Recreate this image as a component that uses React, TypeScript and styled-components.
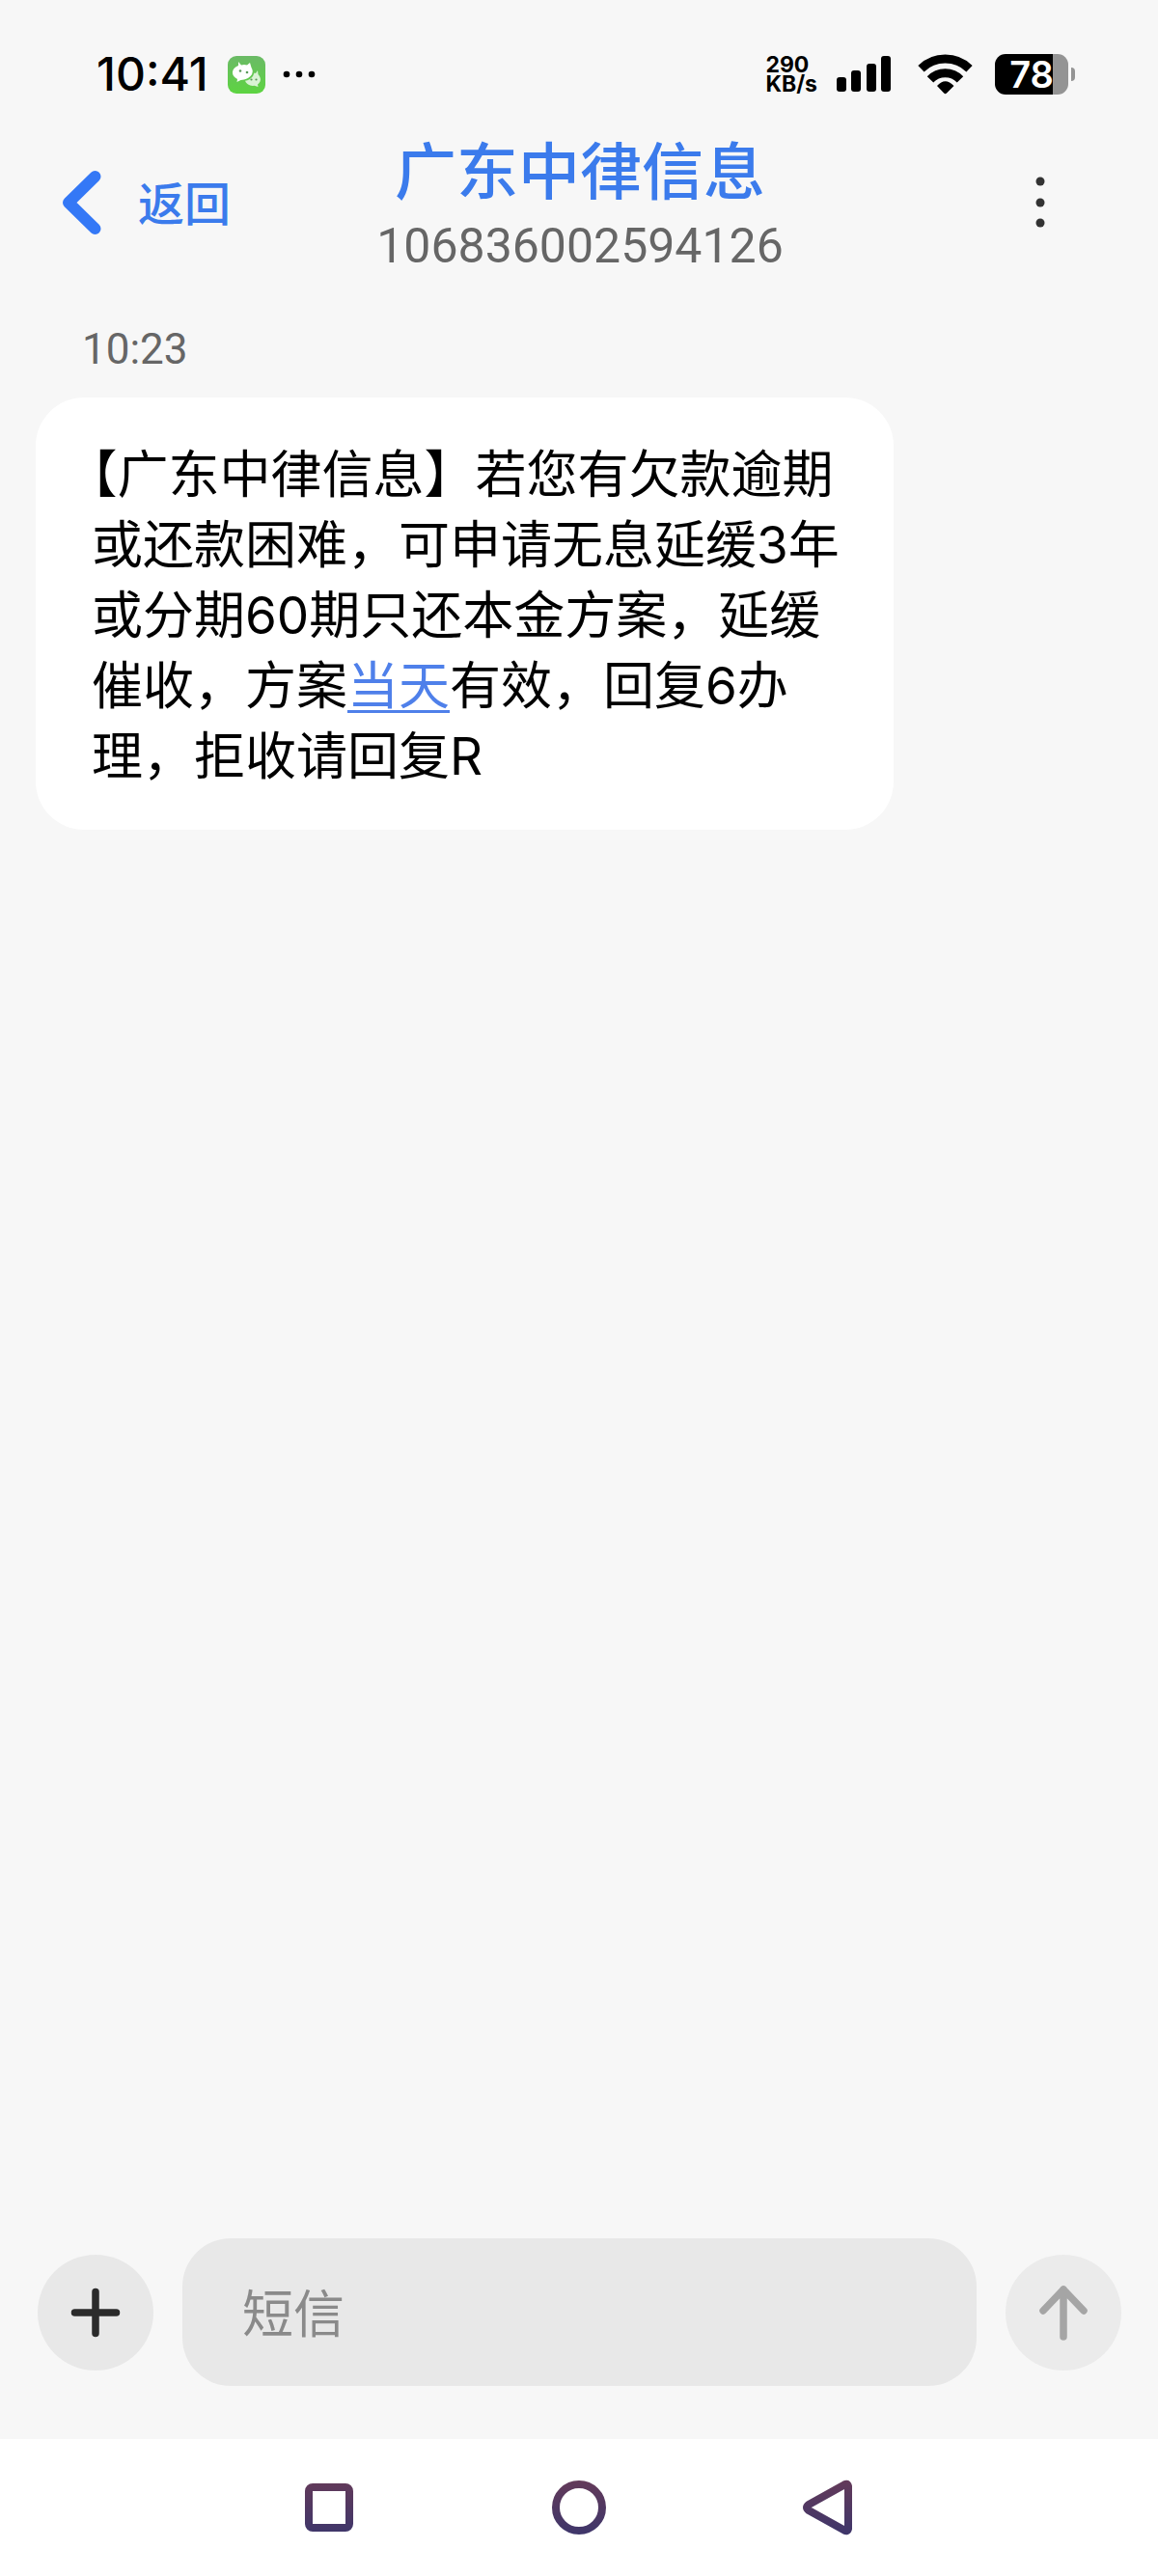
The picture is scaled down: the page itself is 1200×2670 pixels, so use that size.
import React from "react";
import styled, { createGlobalStyle } from "styled-components";

const color = {
  page: "#f7f7f7",
  surface: "#ffffff",
  field: "#e8e8e8",
  fieldMuted: "#ebebeb",
  accent: "#3b7bec",
  link: "#4f80ea",
  ink: "#000000",
  icon: "#2b2b2b",
  muted: "#666666",
  placeholder: "#8a8a8a",
  disabled: "#a5a5a5",
};

const cjk = `"Noto Sans CJK SC", sans-serif`;

const GlobalStyle = createGlobalStyle`
  *, *::before, *::after { box-sizing: border-box; }
  body {
    margin: 0;
    background: ${color.page};
    color: ${color.ink};
    font-family: Inter, ${cjk};
  }
  svg { display: block; flex: none; }
`;

const Screen = styled.div`
  display: flex;
  flex-direction: column;
  min-height: 100vh;
`;

const StatusBar = styled.div`
  display: flex;
  align-items: center;
  justify-content: space-between;
  height: 122px;
  padding: 32px 86px 0 100px;
`;

const StatusGroup = styled.div`
  display: flex;
  align-items: center;
`;

const Clock = styled.time`
  margin-right: 20px;
  font-size: 48px;
  line-height: 60px;
  font-weight: 500;
`;

const AppBadge = styled.span`
  margin-right: 18px;
`;

const NetSpeed = styled.div`
  margin-right: 20px;
  font-size: 23px;
  line-height: 20px;
  font-weight: 700;
`;

const SignalIcon = styled.span`
  margin-right: 28px;
`;

const WifiIcon = styled.span`
  margin-right: 23px;
`;

const Battery = styled.div`
  display: flex;
  align-items: center;
  gap: 3px;
`;

const BatteryBody = styled.div<{ $level: number }>`
  width: 76px;
  height: 42px;
  border-radius: 11px;
  background: linear-gradient(
    to right,
    #000 ${(p) => p.$level}%,
    #949494 ${(p) => p.$level}%
  );
  color: #fff;
  font-size: 38px;
  line-height: 42px;
  font-weight: 600;
  text-align: center;
`;

const BatteryTip = styled.div`
  width: 4px;
  height: 14px;
  border-radius: 0 6px 6px 0;
  background: #949494;
`;

const Header = styled.header`
  display: grid;
  grid-template-columns: 1fr auto 1fr;
  align-items: center;
  height: 176px;
  padding: 0 62px 0 64px;
`;

const PlainButton = styled.button`
  display: inline-flex;
  align-items: center;
  justify-content: center;
  padding: 0;
  border: 0;
  background: none;
  color: inherit;
  font: inherit;
  cursor: pointer;
`;

const BackButton = styled(PlainButton)`
  justify-self: start;
  gap: 37px;
  color: ${color.accent};
  font-family: ${cjk};
  font-size: 48px;
  line-height: 64px;
  font-weight: 500;
`;

const BackLabel = styled.span`
  padding-bottom: 4px;
`;

const MoreButton = styled(PlainButton)`
  justify-self: end;
  width: 120px;
  height: 96px;
`;

const Contact = styled.div`
  display: flex;
  flex-direction: column;
  gap: 10px;
  text-align: center;
`;

const ContactName = styled.h1`
  margin: 0;
  color: ${color.accent};
  font-family: ${cjk};
  font-size: 64px;
  line-height: 80px;
  font-weight: 500;
`;

const ContactNumber = styled.div`
  color: ${color.muted};
  font-family: Roboto, sans-serif;
  font-size: 50px;
  line-height: 64px;
`;

const Thread = styled.main`
  flex: 1;
  padding: 34px 37px;
`;

const SentAt = styled.time`
  display: block;
  margin: 0 0 20px 48px;
  color: ${color.muted};
  font-family: Roboto, sans-serif;
  font-size: 44px;
  line-height: 60px;
`;

const Bubble = styled.p`
  width: fit-content;
  max-width: 889px;
  margin: 0;
  padding: 44px 52px 39px 58px;
  border-radius: 50px;
  background: ${color.surface};
  font-size: 53px;
  line-height: 73px;
  text-spacing-trim: trim-start;
`;

const InlineLink = styled.a`
  color: ${color.link};
  text-decoration: underline;
  text-decoration-thickness: 3px;
  text-underline-offset: 6px;
`;

const Composer = styled.form`
  display: flex;
  align-items: center;
  gap: 30px;
  padding: 0 38px 55px 39px;
`;

const RoundButton = styled(PlainButton)<{ $muted?: boolean }>`
  flex: none;
  width: 120px;
  height: 120px;
  border-radius: 50%;
  background: ${(p) => (p.$muted ? color.fieldMuted : color.field)};
  color: ${(p) => (p.$muted ? color.disabled : color.icon)};
`;

const MessageInput = styled.input`
  flex: 1;
  min-width: 0;
  height: 153px;
  padding: 0 62px 4px;
  border: 0;
  border-radius: 50px;
  outline: 0;
  background: ${color.field};
  color: ${color.ink};
  font-family: ${cjk};
  font-size: 53px;

  &::placeholder {
    color: ${color.placeholder};
    opacity: 1;
  }
`;

const NavBar = styled.nav`
  display: flex;
  align-items: center;
  justify-content: center;
  gap: 139px;
  height: 142px;
  background: ${color.surface};
`;

const NavButton = styled(PlainButton)`
  width: 120px;
  height: 96px;
`;

function WeChatGlyph() {
  return (
    <svg width="39" height="39" viewBox="0 0 39 39" aria-hidden="true">
      <defs>
        <linearGradient id="wechat" x1="0" y1="0" x2="0" y2="1">
          <stop offset="0" stopColor="#6bba66" />
          <stop offset="1" stopColor="#5dd441" />
        </linearGradient>
      </defs>
      <rect width="39" height="39" rx="9" fill="url(#wechat)" />
      <path
        d="M11 6l3 3.5q3-1 6 0L23 7l1.500 5q3 5-1 9-4 4-10 4l-4 2 .5-3Q4.500 21 5 16.500 5.500 12 11 10z"
        fill="#fff"
      />
      <path
        d="M31 15l.5 4q3.500 4 2 7.500-1 2-2.500 3l.5 2.500-4-1.200q-7 .8-9.500-5 5-.8 8-4.800l1.500-3.500 1.500.5z"
        fill="#d9f3d4"
      />
      <g fill="#5b9a5a">
        <circle cx="13" cy="15.500" r="1.300" />
        <circle cx="20" cy="17" r="1.300" />
        <circle cx="24.500" cy="24.500" r="1.100" />
        <circle cx="29.500" cy="24.500" r="1.100" />
      </g>
    </svg>
  );
}

function NavGlyph({ id, children }: { id: string; children: React.ReactNode }) {
  return (
    <svg
      width="60"
      height="60"
      viewBox="0 0 60 60"
      fill="none"
      stroke={`url(#${id})`}
      strokeWidth="8"
      strokeLinejoin="round"
      aria-hidden="true"
    >
      <defs>
        <linearGradient
          id={id}
          gradientUnits="userSpaceOnUse"
          x1="0"
          y1="4"
          x2="0"
          y2="56"
        >
          <stop offset="0" stopColor="#623a5a" />
          <stop offset="1" stopColor="#3f366a" />
        </linearGradient>
      </defs>
      {children}
    </svg>
  );
}

export default function App() {
  return (
    <>
      <GlobalStyle />
      <Screen>
        <StatusBar>
          <StatusGroup>
            <Clock>10:41</Clock>
            <AppBadge>
              <WeChatGlyph />
            </AppBadge>
            <svg width="34" height="8" viewBox="0 0 34 8" aria-hidden="true">
              <circle cx="4" cy="4" r="3.300" />
              <circle cx="17" cy="4" r="3.300" />
              <circle cx="30" cy="4" r="3.300" />
            </svg>
          </StatusGroup>
          <StatusGroup>
            <NetSpeed>
              <div>290</div>
              <div>KB/s</div>
            </NetSpeed>
            <SignalIcon>
              <svg width="56" height="38" viewBox="0 0 56 38" aria-hidden="true">
                <rect x="0" y="22" width="10" height="15" rx="3" />
                <rect x="15" y="15" width="10" height="22" rx="3" />
                <rect x="31" y="8" width="10" height="29" rx="3" />
                <rect x="46" y="0" width="10" height="37" rx="3" />
              </svg>
            </SignalIcon>
            <WifiIcon>
              <svg width="57" height="42" viewBox="0 0 57 42" aria-hidden="true">
                <g fill="none" stroke="#000" strokeWidth="9">
                  <path d="M3.500 15.200A36 36 0 0 1 53.500 15.200" />
                  <path d="M13 26.300A21.500 21.500 0 0 1 44 26.300" />
                </g>
                <path d="M20 33Q28.500 23.500 37.500 33L30 40.500Q28.500 42 27.200 40.500Z" />
              </svg>
            </WifiIcon>
            <Battery>
              <BatteryBody $level={79}>78</BatteryBody>
              <BatteryTip />
            </Battery>
          </StatusGroup>
        </StatusBar>

        <Header>
          <BackButton type="button">
            <svg
              width="42"
              height="68"
              viewBox="0 0 42 68"
              fill="none"
              stroke="#3478f6"
              strokeWidth="12"
              strokeLinecap="round"
              strokeLinejoin="round"
              aria-hidden="true"
            >
              <path d="M34.500 7L7 34L34.500 61" />
            </svg>
            <BackLabel>返回</BackLabel>
          </BackButton>
          <Contact>
            <ContactName>广东中律信息</ContactName>
            <ContactNumber>106836002594126</ContactNumber>
          </Contact>
          <MoreButton type="button" aria-label="更多">
            <svg width="10" height="54" viewBox="0 0 10 54" fill="#333" aria-hidden="true">
              <circle cx="5" cy="5" r="4.500" />
              <circle cx="5" cy="27" r="4.500" />
              <circle cx="5" cy="48" r="4.500" />
            </svg>
          </MoreButton>
        </Header>

        <Thread>
          <SentAt>10:23</SentAt>
          <Bubble lang="zh-CN">
            【广东中律信息】若您有欠款逾期或还款困难，可申请无息延缓3年或分期60期只还本金方案，延缓催收，方案
            <InlineLink href="#today">当天</InlineLink>
            有效，回复6办理，拒收请回复R
          </Bubble>
        </Thread>

        <Composer onSubmit={(e) => e.preventDefault()}>
          <RoundButton type="button" aria-label="添加">
            <svg
              width="52"
              height="52"
              viewBox="0 0 52 52"
              stroke="currentColor"
              strokeWidth="7.500"
              strokeLinecap="round"
              aria-hidden="true"
            >
              <path d="M26 4.500V47.500M4.500 26H47.500" />
            </svg>
          </RoundButton>
          <MessageInput type="text" placeholder="短信" aria-label="短信" />
          <RoundButton type="submit" $muted aria-label="发送">
            <svg
              width="52"
              height="60"
              viewBox="0 0 52 60"
              fill="none"
              stroke="currentColor"
              strokeWidth="7.500"
              strokeLinecap="round"
              strokeLinejoin="round"
              aria-hidden="true"
            >
              <path d="M26 55V6M5 28L26 6L47 28" />
            </svg>
          </RoundButton>
        </Composer>

        <NavBar>
          <NavButton type="button" aria-label="最近任务">
            <NavGlyph id="nav-recent">
              <rect x="9" y="9" width="42" height="42" rx="4" />
            </NavGlyph>
          </NavButton>
          <NavButton type="button" aria-label="主页">
            <NavGlyph id="nav-home">
              <circle cx="30" cy="30" r="24" />
            </NavGlyph>
          </NavButton>
          <NavButton type="button" aria-label="返回上一页">
            <NavGlyph id="nav-back">
              <path d="M50 8Q49 4 45 7L9 27Q5 30 9 33L45 53Q49 56 50 52Z" />
            </NavGlyph>
          </NavButton>
        </NavBar>
      </Screen>
    </>
  );
}
